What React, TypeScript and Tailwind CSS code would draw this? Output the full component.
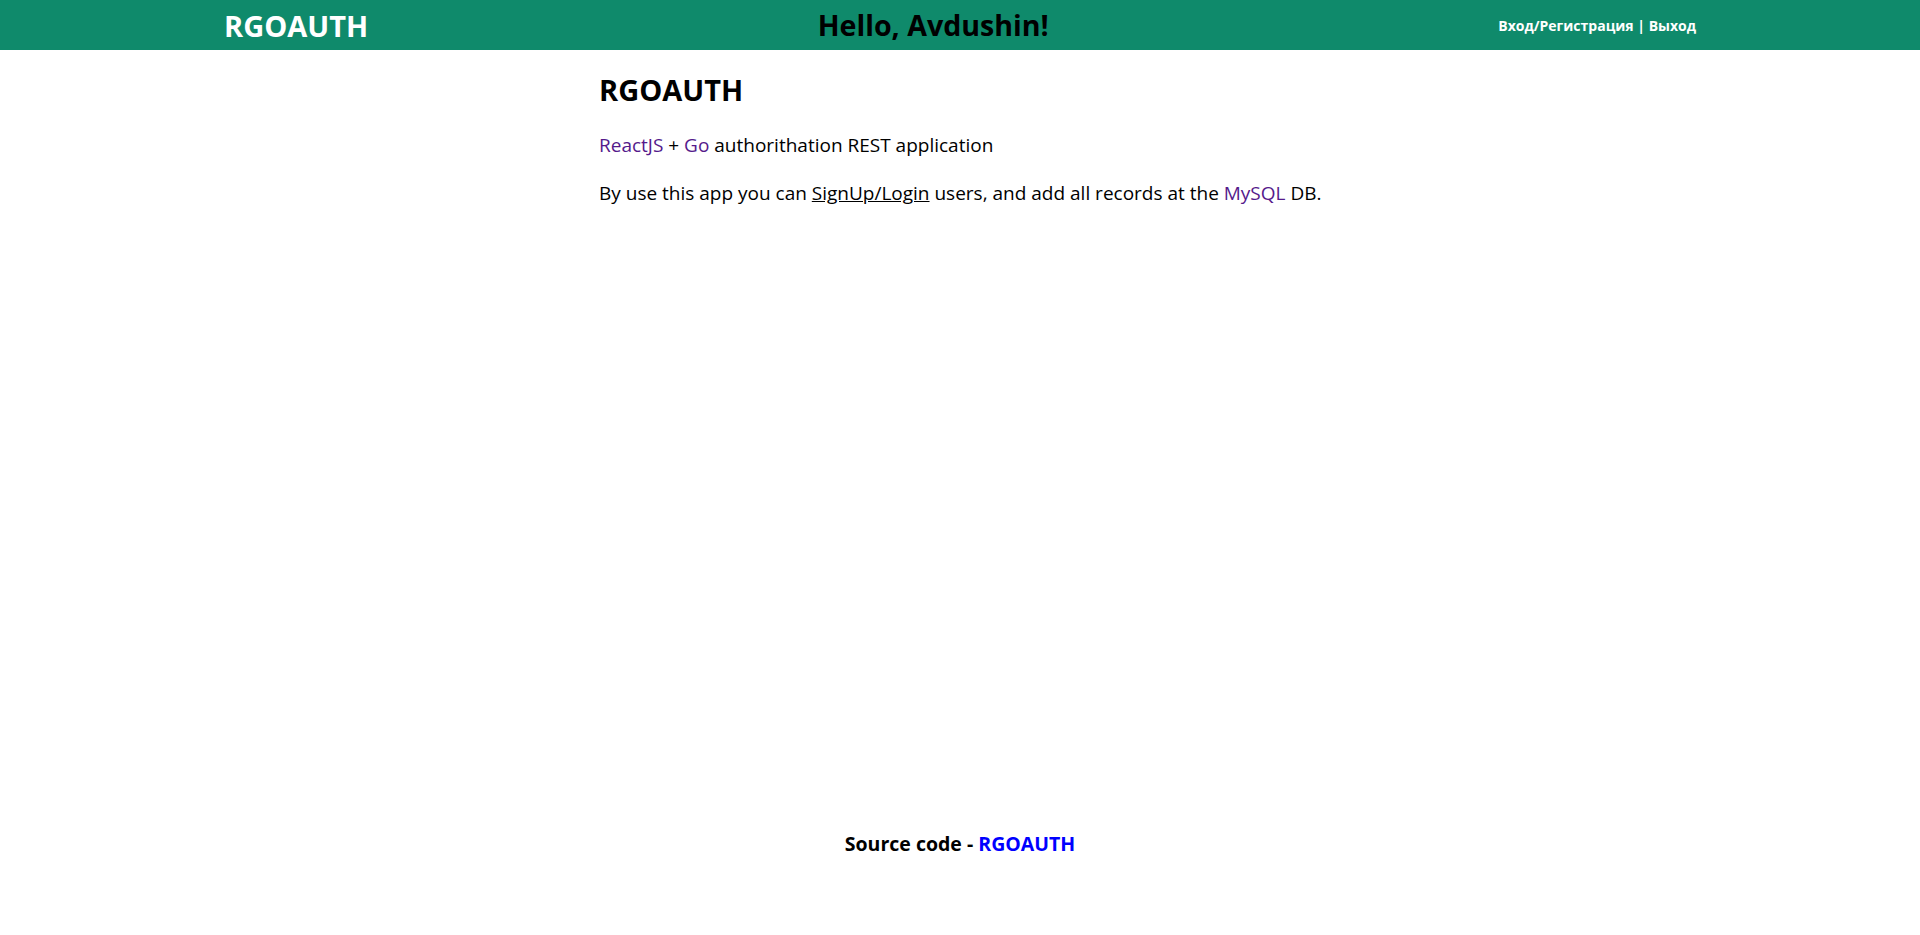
export default function App() {
  return (
    <div
      className="min-h-screen flex flex-col bg-white text-black"
      style={{ fontFamily: '"Open Sans", "Noto Sans", sans-serif' }}
    >
      <header className="h-[50px] bg-[#0f8a6b] flex items-center justify-between px-[224px]">
        <a href="#" className="text-[29px] font-bold text-white leading-none">
          RGOAUTH
        </a>
        <h1 className="text-[28.6px] font-bold leading-none">Hello, Avdushin!</h1>
        <div className="text-[14px] font-bold text-white">
          <a href="#">Вход/Регистрация</a> | <a href="#">Выход</a>
        </div>
      </header>

      <main className="w-[722px] mx-auto pt-[18px]">
        <h2 className="text-[29px] font-bold leading-[44px]">RGOAUTH</h2>
        <p className="text-[19px] mt-[19px] whitespace-nowrap">
          <a href="#" className="text-[#551a8b]">ReactJS</a>
          {' + '}
          <a href="#" className="text-[#551a8b]">Go</a> authorithation REST application
        </p>
        <p className="text-[19px] mt-[19px] whitespace-nowrap">
          By use this app you can{' '}
          <a href="#" className="underline">SignUp/Login</a> users, and add all records at the{' '}
          <a href="#" className="text-[#551a8b]">MySQL</a> DB.
        </p>
      </main>

      <footer className="mt-auto pb-[77px] text-center text-[19.5px] font-bold">
        Source code - <a href="#" className="text-[#0000ff]">RGOAUTH</a>
      </footer>
    </div>
  );
}
